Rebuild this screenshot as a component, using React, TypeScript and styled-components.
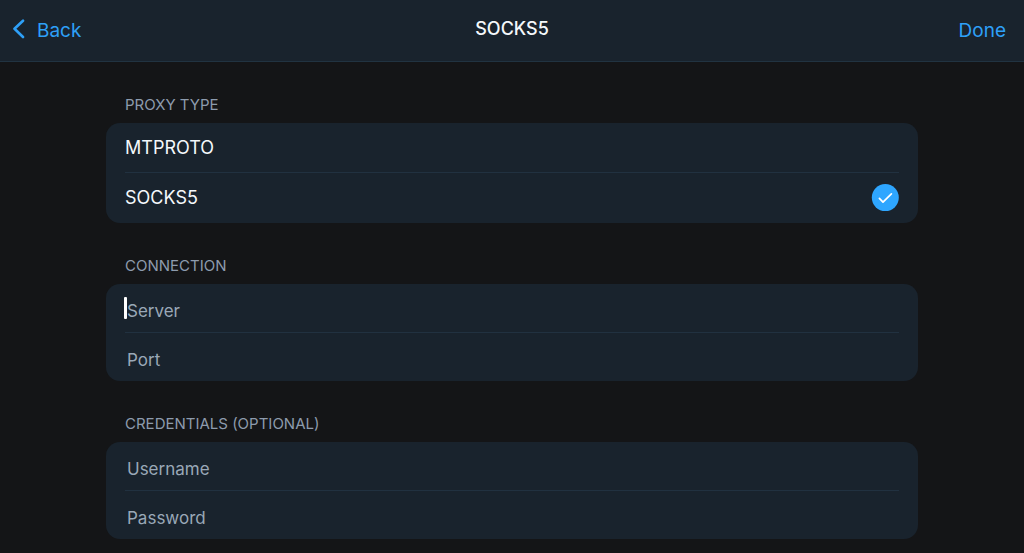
import React, { useState } from "react";
import styled, { createGlobalStyle } from "styled-components";

const GlobalStyle = createGlobalStyle`
  *, *::before, *::after { box-sizing: border-box; }
  body {
    margin: 0;
    background: #141517;
    color: #f4f8fb;
    font-family: Inter, "Liberation Sans", sans-serif;
  }
  button, input { font: inherit; color: inherit; }
`;

const Page = styled.div`
  min-height: 100vh;
`;

const NavBar = styled.header`
  display: grid;
  grid-template-columns: 1fr auto 1fr;
  align-items: center;
  height: 62px;
  padding: 0 12px;
  background: #19232d;
  border-bottom: 1px solid #213341;
`;

const NavButton = styled.button<{ $end?: boolean }>`
  display: flex;
  align-items: center;
  gap: 12px;
  justify-self: ${(p) => (p.$end ? "end" : "start")};
  padding: ${(p) => (p.$end ? "0 6px" : "0")};
  border: 0;
  background: none;
  color: #2ea0f8;
  font-size: 19px;
  line-height: 24px;
  cursor: pointer;
`;

const Title = styled.h1`
  margin: 0;
  padding-bottom: 4px;
  font-size: 18px;
  font-weight: 500;
  line-height: 24px;
`;

const Form = styled.form`
  display: flex;
  flex-direction: column;
  gap: 32px;
  max-width: 844px;
  margin: 0 auto;
  padding: 32px 16px 12px;
`;

const Section = styled.fieldset`
  min-width: 0;
  margin: 0;
  padding: 0;
  border: 0;
`;

const SectionLabel = styled.legend`
  padding: 1px 19px 8px;
  color: #8d9bad;
  font-size: 15px;
  line-height: 20px;
`;

const Card = styled.div`
  padding: 0 19px;
  border-radius: 14px;
  background: #19232d;
`;

const Option = styled.label`
  display: flex;
  align-items: center;
  justify-content: space-between;
  height: 50px;
  font-size: 18px;
  line-height: 24px;
  cursor: pointer;

  &:not(:last-child) { border-bottom: 1px solid #213140; }
`;

const Radio = styled.input`
  appearance: none;
  width: 0;
  height: 0;
  margin: 0;
`;

const OptionName = styled.span`
  flex: 1;
`;

const Field = styled.label`
  display: block;
  position: relative;

  &:not(:last-child) { border-bottom: 1px solid #213140; }
`;

const TextInput = styled.input`
  display: block;
  width: 100%;
  height: 48px;
  padding: 6px 2px 0;
  border: 0;
  outline: 0;
  background: none;
  font-size: 17px;
  line-height: 24px;

  &::placeholder { color: #9aa8b7; opacity: 1; }
`;

const Caret = styled.span`
  position: absolute;
  top: 13px;
  left: -1px;
  width: 3px;
  height: 22px;
  border-radius: 1px;
  background: #ffffff;
`;

const BackIcon = () => (
  <svg width="13" height="24" viewBox="0 0 13 24" fill="none" aria-hidden="true">
    <path d="M11 1.7 2.5 9.8 11 18" stroke="#2ea0f8" strokeWidth="2.6" strokeLinecap="round" strokeLinejoin="round" />
  </svg>
);

const CheckIcon = () => (
  <svg width="28" height="28" viewBox="0 0 28 28" fill="none" aria-hidden="true">
    <circle cx="14.3" cy="13.6" r="13.5" fill="#2ea6ff" />
    <path d="M8.4 14.4 12 18.2 20.4 9.8" stroke="#ffffff" strokeWidth="1.7" strokeLinecap="round" strokeLinejoin="round" />
  </svg>
);

const proxyTypes = ["MTPROTO", "SOCKS5"];

const fieldGroups = [
  {
    label: "CONNECTION",
    fields: [
      { name: "Server", type: "text", caret: true },
      { name: "Port", type: "text", caret: false },
    ],
  },
  {
    label: "CREDENTIALS (OPTIONAL)",
    fields: [
      { name: "Username", type: "text", caret: false },
      { name: "Password", type: "password", caret: false },
    ],
  },
];

export default function App() {
  const [selected, setSelected] = useState("SOCKS5");

  return (
    <Page>
      <GlobalStyle />
      <NavBar>
        <NavButton type="button">
          <BackIcon />
          Back
        </NavButton>
        <Title>SOCKS5</Title>
        <NavButton type="submit" form="proxy" $end>
          Done
        </NavButton>
      </NavBar>
      <Form id="proxy" onSubmit={(e) => e.preventDefault()}>
        <Section>
          <SectionLabel>PROXY TYPE</SectionLabel>
          <Card>
            {proxyTypes.map((name) => (
              <Option key={name}>
                <Radio
                  type="radio"
                  name="proxyType"
                  value={name}
                  checked={selected === name}
                  onChange={() => setSelected(name)}
                />
                <OptionName>{name}</OptionName>
                {selected === name && <CheckIcon />}
              </Option>
            ))}
          </Card>
        </Section>
        {fieldGroups.map((group) => (
          <Section key={group.label}>
            <SectionLabel>{group.label}</SectionLabel>
            <Card>
              {group.fields.map((field) => (
                <Field key={field.name}>
                  <TextInput
                    type={field.type}
                    name={field.name.toLowerCase()}
                    placeholder={field.name}
                    aria-label={field.name}
                  />
                  {field.caret && <Caret />}
                </Field>
              ))}
            </Card>
          </Section>
        ))}
      </Form>
    </Page>
  );
}
